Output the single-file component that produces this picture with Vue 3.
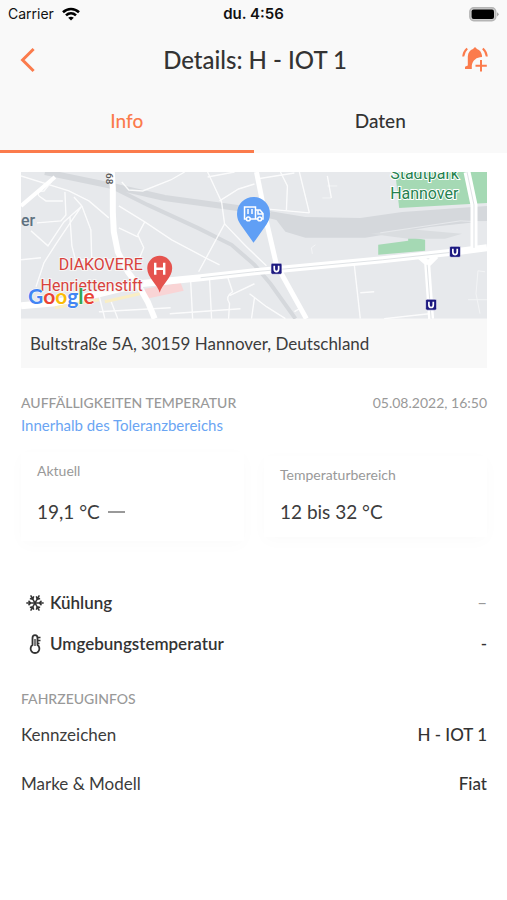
<template>
  <div class="page">
    <header class="top">
      <div class="status-bar">
        <div class="carrier">
          Carrier
          <svg width="18" height="14" viewBox="0 0 18 14" fill="none" stroke="#000" stroke-width="2.6">
            <path d="M1 5.2C5.6 .9 12.4 .9 17 5.2" />
            <path d="M4 8.4C6.9 5.7 11.1 5.7 14 8.4" />
            <path d="M9 13.6 6.2 10.8Q9 8.6 11.8 10.8Z" fill="#000" stroke="none" />
          </svg>
        </div>
        <div class="time">du. 4:56</div>
        <div class="battery">
          <svg width="30" height="15" viewBox="0 0 30 15">
            <rect x="0.8" y="0.8" width="26" height="13" rx="4" fill="#ccc" stroke="#b5b5b5" stroke-width="1.4" />
            <rect x="2.6" y="2.6" width="22.4" height="9.4" rx="2" fill="#000" />
            <path d="M28 5.2Q31.4 7.3 28 9.6Z" fill="#aaa" />
          </svg>
        </div>
      </div>

      <div class="title-row">
        <button class="icon-button" aria-label="Zurück">
          <svg width="16" height="26" viewBox="0 0 16 26" fill="none" stroke="#fb7b4c" stroke-width="3">
            <path d="M13.6 2 2.6 13 13.6 24" />
          </svg>
        </button>
        <h1>Details: H - IOT 1</h1>
        <button class="icon-button" aria-label="Alarm hinzufügen">
          <svg width="26" height="28" viewBox="0 0 26 28">
            <path
              d="M13 1 15 3C17.800 4 19.400 6 20 9.500V11C14.500 11 10.600 14.500 9.800 19.500V23H3V20.800L5.800 19.500V10.500C6 6.500 8 4 11 3Z"
              fill="#fb7b4c"
            />
            <g fill="none" stroke="#fb7b4c" stroke-width="2">
              <path d="M5.2 2.500Q1.800 5.500 1.200 10.500" />
              <path d="M20.8 2.500Q24.2 5.500 24.8 10.500" />
              <path d="M19 14V25.500M13.500 19.800H24.800" />
            </g>
          </svg>
        </button>
      </div>

      <nav class="tabs" role="tablist">
        <button
          v-for="tab in tabs"
          :key="tab"
          class="tab"
          role="tab"
          :aria-selected="tab === activeTab"
          :class="{ active: tab === activeTab }"
          @click="activeTab = tab"
        >
          {{ tab }}
        </button>
      </nav>
    </header>

    <main class="content">
      <div class="location">
        <svg class="map" viewBox="0 0 467 147">
          <rect width="467" height="147" fill="#e7e9ec" />
          <!-- parks and hospital area -->
          <path d="M375 0H467V31L379 36Z" fill="#a5d9b4" />
          <path d="M358 73 388 69V65L405 68V79L358 83Z" fill="#a5d9b4" />
          <path d="M124 117 160 111 163 119 126 127Z" fill="#f9d4d5" />
          <!-- railway -->
          <g fill="none" stroke="#d5d8dc">
            <path d="M24 0 87 13 144 26 217 36 260 46" stroke-width="6" />
            <path d="M91 15 127 33 177 56 211 73 234 93 250 112 275 147" stroke-width="4" />
          </g>
          <path d="M249 39 285 45 340 46 382 40 467 34V49L410 55 345 66H285L265 60Z" fill="#d5d8dc" />
          <path d="M350 62 385 57 442 62 425 67 388 67Z" fill="#dadde0" />
          <path d="M360 61 440 49 467 50" fill="none" stroke="#e7e9ec" stroke-width="1" />
          <!-- side streets -->
          <g fill="none" stroke="#fff" stroke-width="1.4" opacity="0.85">
            <path d="M0 4 48 19 68 29 88 46" />
            <path d="M18 24Q15 19 23 19L31 9M18 24 25 29H42M44 20 45 43 40 49 16 51" />
            <path d="M10 59 27 74 43 50 61 34Q36 70 23 91L15 115" />
            <path d="M49 45 51 74 56 94M61 34 70 58 71 91M61 34 53 25" />
            <path d="M0 88 20 86M60 88H95" />
            <path d="M98 34 124 50 151 68 185 86 199 93" />
            <path d="M124 50 117 63 123 76 118 88M98 56 117 65" />
            <path d="M101 10 108 18 122 19 150 8 164 0" />
            <path d="M187 0 194 15 201 30 204 52 178 100" />
            <path d="M187 5 214 0M199 29 218 17 234 12M204 52 225 74 246 94" />
            <path d="M236 7 274 1M260 0 267 14 266 38M279 0 289 41" />
            <path d="M245 37 289 41M307 4 311 26" />
            <path d="M78 123 84 147M90 129 97 147M78 140 150 136M119 118 127 128" />
            <path d="M170 109 172 147M189 108 191 147M149 142 220 137" />
            <path d="M207 105 212 120Q204 125 209 132L208 147M209 124 234 112" />
            <path d="M229 122 246 135 265 147M234 126 231 147M274 140 281 136" />
            <path d="M334 93 340 147M340 121 354 120M364 147 409 142" />
          </g>
          <g fill="none" stroke="#fff" stroke-width="1" opacity="0.5">
            <path d="M302 26H311M307 14H317M292 82 291 76 295 73" />
            <path d="M465 100 458 99 456 122 460 142M448 128H467" />
          </g>
          <!-- main roads -->
          <g fill="none" stroke="#fff">
            <path d="M0 34 34 5" stroke-width="4" />
            <path d="M91 0 92 16 92 40 93 60 97 80 107 100 119 116 127 130 134 147" stroke-width="6" />
            <path d="M0 134 34 131 78 122 119 112 180 106 234 100 362 88 436 80 467 76" stroke-width="7" />
            <path d="M236 0 246 50 256 93 286 147" stroke-width="5" />
            <path d="M447 0 454 33V78" stroke-width="7" />
            <path d="M400 85 407 91 411 147M416 84 407 93" stroke-width="6" />
          </g>
          <g fill="none" stroke="#dfe2e5" stroke-width="1">
            <path d="M180 106 234 100 362 88 436 80" />
            <path d="M447 0 454 33V76M407 93 411 147" />
          </g>
          <path d="M34 136 78 128M84 130 119 122" stroke="#f9eec5" stroke-width="3" />
          <!-- labels -->
          <g class="map-label">
            <text x="0" y="54" class="district">er</text>
            <text x="1" y="-85" transform="rotate(90)" class="road-number">68</text>
            <text x="370" y="7" class="park">Stadtpark</text>
            <text x="370" y="27" class="park">Hannover</text>
            <text x="122" y="98" text-anchor="end" class="hospital">DIAKOVERE</text>
            <text x="122" y="119" text-anchor="end" class="hospital">Henriettenstift</text>
          </g>
          <text x="7" y="132" class="google">
            <tspan fill="#4285f4">G</tspan><tspan fill="#ea4335">o</tspan><tspan fill="#fbbc05">o</tspan><tspan fill="#4285f4">g</tspan><tspan fill="#34a853">l</tspan><tspan fill="#ea4335">e</tspan>
          </text>
          <!-- underground stations -->
          <g v-for="stop in stops" :key="stop.x" :transform="`translate(${stop.x} ${stop.y})`">
            <rect x="-5.5" y="-5.5" width="11" height="11" rx="1.5" fill="#1c1980" stroke="#fff" stroke-width="0.6" />
            <path d="M-2.2 -3V.3Q-2.2 2.8 0 2.8T2.2 .3V-3" fill="none" stroke="#fff" stroke-width="1.7" />
          </g>
          <!-- hospital pin -->
          <path d="M139 121C137 113 126.500 106 126.500 96.500A12.500 12.500 0 0 1 151.500 96.500C151.500 106 141 113 139 121Z" fill="#e5534e" />
          <path d="M134.500 91V103M143.500 91V103M134.500 97H143.500" stroke="#fff" stroke-width="2.400" />
          <!-- vehicle pin -->
          <path d="M233 71 220 52.500C217 48 216.500 45 216.500 41.500A16.500 16.500 0 0 1 249.500 41.500C249.500 45 249 48 246 52.500Z" fill="#609ff5" />
          <g fill="none" stroke="#fff" stroke-width="1.5">
            <path d="M226 47H224V35H235V47H229.500M235 38H239.500L242.500 41.500V47H241M237.500 47H235M237.500 38V42H242" />
            <path d="M227.500 37V42M231.500 37V42" />
            <circle cx="227.800" cy="47" r="1.900" />
            <circle cx="239.200" cy="47" r="1.900" />
          </g>
        </svg>
        <div class="address">Bultstraße 5A, 30159 Hannover, Deutschland</div>
      </div>

      <section class="temperature">
        <div class="section-head">
          <h2>AUFFÄLLIGKEITEN TEMPERATUR</h2>
          <time datetime="2022-08-05T16:50">05.08.2022, 16:50</time>
        </div>
        <p class="tolerance">Innerhalb des Toleranzbereichs</p>
        <div class="cards">
          <div class="card">
            <div class="card-label">Aktuell</div>
            <div class="card-value current">
              19,1 °C
              <span class="trend"></span>
            </div>
          </div>
          <div class="card">
            <div class="card-label">Temperaturbereich</div>
            <div class="card-value">12 bis 32 °C</div>
          </div>
        </div>
      </section>

      <dl class="sensors">
        <div class="row">
          <dt>
            <svg width="18" height="18" viewBox="0 0 18 18" fill="none" stroke="#333" stroke-width="1.5">
              <g v-for="angle in [0, 60, 120]" :key="angle" :transform="`rotate(${angle} 9 9)`">
                <path d="M.3 9H17.700M2.500 6.800 4.700 9 2.500 11.200M15.500 6.800 13.300 9 15.500 11.200" />
              </g>
            </svg>
            Kühlung
          </dt>
          <dd class="muted">–</dd>
        </div>
        <div class="row">
          <dt>
            <svg width="18" height="20" viewBox="0 0 18 20" fill="none" stroke="#333" stroke-width="1.800">
              <path d="M6.500 11V4Q6.500 1.200 9 1.200T11.500 4V11A4.400 4.400 0 1 1 6.500 11Z" />
              <path d="M9 5V12M11 3.500H14.500M11 6.500H14.500M11 9.500H13.500" stroke-width="1.300" />
            </svg>
            Umgebungstemperatur
          </dt>
          <dd>-</dd>
        </div>
      </dl>

      <section class="vehicle">
        <h2>FAHRZEUGINFOS</h2>
        <dl>
          <div v-for="info in vehicleInfos" :key="info.label" class="row">
            <dt>{{ info.label }}</dt>
            <dd>{{ info.value }}</dd>
          </div>
        </dl>
      </section>
    </main>
  </div>
</template>

<script setup>
import { ref } from "vue";

const tabs = ["Info", "Daten"];
const activeTab = ref("Info");

const stops = [
  { x: 256, y: 97 },
  { x: 435, y: 80 },
  { x: 411, y: 133 },
];

const vehicleInfos = [
  { label: "Kennzeichen", value: "H - IOT 1" },
  { label: "Marke & Modell", value: "Fiat" },
];
</script>

<style>
body {
  margin: 0;
  background: #fff;
}
</style>

<style scoped>
.page {
  font-family: Lato, "Open Sans", sans-serif;
  font-size: 17px;
  line-height: 24px;
  color: #3c3c3c;
}

h1,
h2,
p,
dl,
dd {
  margin: 0;
}

button {
  padding: 0;
  border: 0;
  background: none;
  font-family: inherit;
  cursor: pointer;
}

svg {
  display: block;
}

.top {
  background: #f9f9f9;
}

.status-bar {
  display: grid;
  grid-template-columns: 1fr auto 1fr;
  align-items: center;
  height: 28px;
  padding: 0 8px;
  font-family: Inter, sans-serif;
  font-size: 14px;
  color: #111;
}

.carrier {
  display: flex;
  align-items: center;
  gap: 8px;
}

.time {
  font-size: 15px;
  font-weight: 600;
}

.battery {
  display: flex;
  justify-content: flex-end;
}

.title-row {
  display: grid;
  grid-template-columns: 28px 1fr 28px;
  align-items: center;
  height: 63px;
  padding: 0 17px 0 20px;
}

.icon-button {
  display: flex;
}

h1 {
  font-size: 24px;
  font-weight: 500;
  line-height: 32px;
  text-align: center;
  color: #333;
}

.tabs {
  display: grid;
  grid-template-columns: 1fr 1fr;
}

.tab {
  height: 62px;
  border-bottom: 3px solid transparent;
  font-size: 19px;
  font-weight: 500;
  color: #333;
}

.tab.active {
  border-color: #fb7b4c;
  color: #fb7b4c;
}

.content {
  padding: 19px 20px 20px 21px;
}

.map {
  width: 100%;
}

.map-label {
  font-family: Roboto, sans-serif;
  font-size: 16px;
}

.district {
  fill: #5e7180;
  font-weight: 500;
}

.park {
  fill: #25814f;
  stroke: #fff;
  stroke-width: 2px;
  paint-order: stroke;
}

.hospital {
  fill: #d8423d;
  stroke: #f6f6f6;
  stroke-width: 2px;
  paint-order: stroke;
}

.road-number {
  font-size: 10px;
  font-weight: 500;
  fill: #555;
}

.google {
  font-family: Lato, sans-serif;
  font-size: 21px;
  font-weight: 700;
  stroke: #fff;
  stroke-width: 1px;
  paint-order: stroke;
}

.address {
  padding: 13px 9px 12px;
  background: #f8f8f8;
}

.temperature {
  margin-top: 23px;
}

.section-head {
  display: flex;
  justify-content: space-between;
  align-items: center;
}

h2 {
  font-size: 14px;
  font-weight: 500;
  line-height: 24px;
  color: #999;
}

time {
  font-size: 14px;
  color: #999;
}

.tolerance {
  font-size: 15px;
  line-height: 20px;
  color: #6aa5f3;
}

.cards {
  display: grid;
  grid-template-columns: 1fr 1fr;
  align-items: center;
  gap: 20px;
  margin-top: 17px;
}

.card {
  padding: 9px 16px 13px;
  background: #fff;
  box-shadow: 0 4px 16px rgba(0, 0, 0, 0.02);
}

.card-label {
  font-size: 14px;
  line-height: 20px;
  color: #999;
}

.card-value {
  margin-top: 15px;
  font-size: 19px;
}

.current {
  display: flex;
  align-items: center;
  gap: 8px;
  line-height: 32px;
}

.trend {
  width: 17px;
  height: 2px;
  background: #999;
}

.row {
  display: flex;
  justify-content: space-between;
  align-items: center;
}

dd {
  font-size: 17px;
  font-weight: 500;
  color: #333;
}

.sensors {
  margin-top: 42px;
}

.sensors .row {
  height: 41px;
}

.sensors dt {
  display: flex;
  align-items: center;
  gap: 6px;
  padding-left: 5px;
  font-weight: 600;
  color: #333;
}

.sensors .muted {
  font-weight: 400;
  color: #999;
}

.vehicle {
  margin-top: 22px;
}

.vehicle .row {
  height: 49px;
}
</style>
